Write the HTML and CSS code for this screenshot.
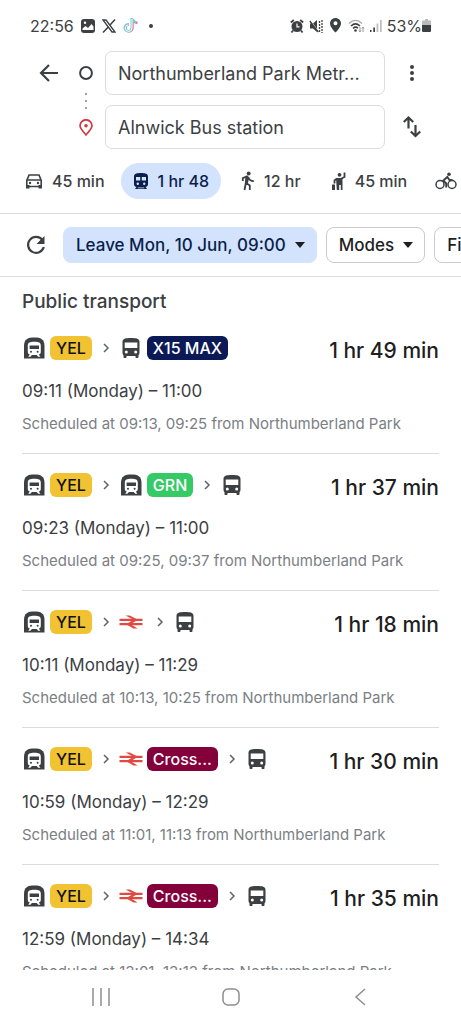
FILE: index.html
```html
<!DOCTYPE html>
<html lang="en-GB">
<head>
<meta charset="utf-8">
<meta name="viewport" content="width=device-width, initial-scale=1">
<title>Directions</title>
<link rel="stylesheet" href="styles.css">
</head>
<body>
<svg class="sprite" aria-hidden="true">
  <symbol id="subway" viewBox="0 0 24 24">
    <path fill="#3c4043" d="M2 22.500V10C2 3 6 1.500 12.300 1.500S22.500 3 22.500 10v12.500z"/>
    <path fill="#fff" d="M5.800 9.500c0-3 2-3.800 6.500-3.800s6.500.8 6.500 3.800v6.500c0 1.500-1 2.300-2 2.500l1.600 2.300h-2.200l-1.500-1.900H9.900l-1.500 1.900H6.200l1.600-2.300c-1-.2-2-1-2-2.500z"/>
    <path fill="#3c4043" d="M7.600 9.500H17V13H7.600z"/>
    <circle fill="#3c4043" cx="9" cy="15.800" r="1"/><circle fill="#3c4043" cx="15.600" cy="15.800" r="1"/>
  </symbol>
  <symbol id="bus" viewBox="0 0 24 24">
    <path fill="#3c4043" d="M3.500 6c0-3.500 3-4 8.500-4s8.500.5 8.500 4v11c0 .9-.4 1.700-1 2.200V21c0 .6-.4 1-1 1h-1c-.6 0-1-.4-1-1v-1h-9v1c0 .6-.4 1-1 1h-1c-.6 0-1-.4-1-1v-1.800c-.6-.5-1-1.300-1-2.200z"/>
    <path fill="#fff" d="M5.700 6.500h12.600V12H5.700z"/>
    <circle fill="#fff" cx="7.300" cy="16" r="1.500"/><circle fill="#fff" cx="16.700" cy="16" r="1.500"/>
  </symbol>
  <symbol id="rail" viewBox="0 0 24 16">
    <path fill="none" stroke="#e04a43" stroke-width="2.200" d="M.5 5.800h23M.5 10.200h23"/>
    <path fill="#e04a43" d="M6.500 1.500h4.200L19 5.800 11.500 10.200 18.700 14.500h-4.200L7 10.200l7.500-4.400z"/>
  </symbol>
  <symbol id="chevron" viewBox="0 0 8 10">
    <path fill="none" stroke="#5f6368" stroke-width="1.500" d="M2 1l4 4-4 4"/>
  </symbol>
</svg>

<div class="screen">
  <div class="status">
    <div class="status-side">
      <span class="clock">22:56</span>
      <svg width="14" height="14" viewBox="0 0 14 14"><rect width="14" height="14" rx="3" fill="#3c4043"/><path fill="#fff" d="M1.500 9.500L4.500 7l2.500 2 3.500-4 2 2.500v3.500h-11z"/><circle cx="4" cy="3.800" r="1.200" fill="#fff"/></svg>
      <svg width="14" height="14" viewBox="0 0 14 14"><path fill="#fff" stroke="#3c4043" stroke-width="1.300" d="M1 1h3l9 12h-3z"/><path stroke="#3c4043" stroke-width="1.500" d="M13 .5L7.800 6.300M6.300 8L1 13.500"/></svg>
      <svg width="16" height="17" viewBox="0 0 16 17" fill="none"><path stroke="#e8789b" stroke-width="2.500" d="M9.500 2v9a3.500 3.500 0 1 1-3.500-3.500M9.500 2c.5 2.500 2 3.500 5 4"/><path stroke="#63d5db" stroke-width="2" d="M8.500 1v9.500A3.500 3.500 0 1 1 5 7.200M8.500 1c.5 2.500 2 3.500 4.500 4"/><path stroke="#fff" d="M9 2v9a3.300 3.300 0 1 1-3.500-3.200"/></svg>
      <span class="dot"></span>
    </div>
    <div class="status-side status-right">
      <svg width="14" height="14" viewBox="0 0 14 14"><circle cx="7" cy="7.500" r="5.500" fill="#3c4043"/><path stroke="#3c4043" stroke-width="1.800" d="M.8 3.500L3.800 1M10.200 1l3 2.500M3 11.500l-1.500 2M11 11.500l1.500 2"/><path stroke="#fff" stroke-width="1.200" fill="none" d="M7 4.500v3.300h2.500"/></svg>
      <svg width="14" height="14" viewBox="0 0 14 14"><path fill="#3c4043" d="M1 4.500h3L8 1v12L4 9.500H1z"/><path stroke="#fff" stroke-width="1" d="M1.500 1.500l8 11"/><path stroke="#3c4043" stroke-width="1.300" d="M.8 2l8.500 11"/><path stroke="#3c4043" stroke-width="1.300" stroke-dasharray="2 1" d="M10.500 2v11M13 1v13"/></svg>
      <svg class="location" width="11" height="15" viewBox="0 0 11 15"><path fill="#3c4043" fill-rule="evenodd" d="M5.500 0A5.300 5.300 0 0 1 11 5.400C11 9 5.500 14.500 5.500 14.500S0 9 0 5.400A5.300 5.300 0 0 1 5.500 0zm0 3.300a2 2 0 1 0 0 4 2 2 0 0 0 0-4z"/></svg>
      <svg width="17" height="14" viewBox="0 0 17 14" fill="none"><path stroke="#aaa" stroke-width="1.300" d="M1 4.500c4-4 9-4 13 0"/><path stroke="#3c4043" stroke-width="1.500" d="M3 7c3-2.800 6-2.800 9 0M5 9.300c2-1.600 3.500-1.600 5 0"/><circle cx="7.500" cy="11.500" r="1.300" fill="#3c4043"/><path stroke="#999" d="M12 8v5l-1.300-1.500M12 13l1-1.500M15 13V8l-1.300 1.500M15 8l1 1.500"/></svg>
      <svg width="12" height="13" viewBox="0 0 12 13"><path fill="#3c4043" d="M0 11h1.500v2H0zM3.300 8.500h1.700V13H3.300z"/><path fill="#bbb" d="M6.600 4.500h1.700V13H6.600zM10 1h1.700v12H10z"/></svg>
      <span class="battery-label">53%</span>
      <svg class="battery" width="9" height="13" viewBox="0 0 9 13"><path fill="#bbb" d="M3 0h3v1.500h3V7H0V1.500h3z"/><path fill="#3c4043" d="M0 6h9v5.500c0 1-.5 1.500-1.500 1.500h-6C.5 13 0 12.500 0 11.500z"/></svg>
    </div>
  </div>

  <header class="trip">
    <button class="icon-button" aria-label="Back"><svg width="20" height="20" viewBox="0 0 20 20"><path fill="none" stroke="#3c4043" stroke-width="2.200" d="M19 10H2.500M10 2l-8 8 8 8"/></svg></button>
    <span class="marker"><svg width="14" height="14" viewBox="0 0 14 14"><circle cx="7" cy="7" r="5.900" fill="none" stroke="#3c4043" stroke-width="2"/></svg></span>
    <input class="place" type="text" aria-label="Starting point" value="Northumberland Park Metr...">
    <button class="icon-button" aria-label="More options"><svg width="20" height="20" viewBox="0 0 20 20" fill="#3c4043"><circle cx="10" cy="4" r="2"/><circle cx="10" cy="10" r="2"/><circle cx="10" cy="16" r="2"/></svg></button>
    <span class="marker destination"><svg width="14" height="17" viewBox="0 0 14 17"><path fill="none" stroke="#d03a42" stroke-width="1.700" d="M7 15.800C3.500 12 1 9.500 1 6.800a6 6 0 0 1 12 0c0 2.700-2.500 5.200-6 9z"/><circle cx="7" cy="6.800" r="1.800" fill="#d03a42"/></svg></span>
    <input class="place" type="text" aria-label="Destination" value="Alnwick Bus station">
    <button class="icon-button" aria-label="Swap start and destination"><svg width="20" height="24" viewBox="0 0 20 24" fill="none" stroke="#3c4043" stroke-width="2.200"><path d="M6.500 13.500V2.500M1.800 7l4.700-4.500L11.200 7M13.500 10v11M8.800 16.500l4.700 4.500 4.700-4.500"/></svg></button>
  </header>

  <nav class="modes" aria-label="Travel mode">
    <button class="mode"><svg width="18" height="18" viewBox="0 0 18 18"><path fill="none" stroke="#3c4043" stroke-width="1.600" d="M1.800 14.500V8.500L4 3h10l2.200 5.500v6zM2 8h14"/><path fill="#3c4043" d="M1 13h3.500v3.500H1zM13.500 13H17v3.500h-3.500z"/><circle cx="5" cy="11" r="1.200" fill="#3c4043"/><circle cx="13" cy="11" r="1.200" fill="#3c4043"/></svg>45 min</button>
    <button class="mode selected" aria-pressed="true"><svg width="16" height="18" viewBox="0 0 16 18"><path fill="#0b1f4d" d="M1 4.500C1 1.500 4 1 8 1s7 .5 7 3.500V12c0 1.700-1 2.700-2.500 3L14 17H2l1.500-2C2 14.700 1 13.700 1 12z"/><path fill="#d3e3fd" d="M3 5h4.200v3.500H3zM8.800 5H13v3.500H8.800zM4.800 15.500h6.400v.8H4.800z"/><circle fill="#d3e3fd" cx="4.800" cy="11.700" r="1.200"/><circle fill="#d3e3fd" cx="11.200" cy="11.700" r="1.200"/></svg>1 hr 48</button>
    <button class="mode walk"><svg width="14" height="20" viewBox="0 0 14 20"><circle cx="7.700" cy="2.500" r="1.900" fill="#3c4043"/><path fill="none" stroke="#3c4043" stroke-width="1.800" d="M1.800 10V7.200L6 5.300l3 3.500c1 1 2.200 1.300 3.800 1.300M6 6l-2.500 13M5 12l3.800 2.500V19"/><path fill="#3c4043" d="M4.500 5.500l3.800.8-1.500 6.500-3-.3z"/></svg>12 hr</button>
    <button class="mode hail"><svg width="14" height="18" viewBox="0 0 14 18"><circle cx="7.500" cy="2.800" r="1.900" fill="#3c4043"/><path fill="#3c4043" d="M4 6h6.500v12H8.800v-5H7.200v5H4.800zM0 12.500h3V18H0z"/><path fill="none" stroke="#3c4043" stroke-width="1.800" d="M9.500 6.500L12.500 5V.5M5 6.500L2.500 8.500v3"/></svg>45 min</button>
    <button class="mode bike" aria-label="Cycling"><svg width="22" height="18" viewBox="0 0 22 18" fill="none" stroke="#3c4043" stroke-width="1.500"><circle cx="5" cy="12.500" r="4"/><circle cx="17" cy="12.500" r="4"/><path stroke-width="1.900" d="M11.200 15.500v-4L8.300 8.500l4-3.500 2.200 3h3"/><circle cx="14" cy="2.300" r="1.800" fill="#3c4043" stroke="none"/></svg></button>
  </nav>

  <div class="filters">
    <button class="icon-button refresh" aria-label="Refresh"><svg width="20" height="20" viewBox="0 0 20 20"><path fill="none" stroke="#3c4043" stroke-width="2.200" d="M17.800 12A8 8 0 1 1 16.500 5L13 8.500"/><path fill="#3c4043" d="M18.500 1v8h-8z"/></svg></button>
    <button class="filter active">Leave Mon, 10 Jun, 09:00<span class="caret"></span></button>
    <button class="filter">Modes<span class="caret"></span></button>
    <button class="filter">Filters<span class="caret"></span></button>
  </div>

  <main class="results">
    <h1>Public transport</h1>
    <ul>
      <li>
        <div class="summary"><div class="legs"><svg class="leg"><use href="#subway"/></svg><span class="line yellow">YEL</span><svg class="next"><use href="#chevron"/></svg><svg class="leg"><use href="#bus"/></svg><span class="line navy">X15 MAX</span></div><strong>1 hr 49 min</strong></div>
        <p class="times">09:11 (Monday) – 11:00</p>
        <p class="schedule">Scheduled at 09:13, 09:25 from Northumberland Park</p>
      </li>
      <li>
        <div class="summary"><div class="legs"><svg class="leg"><use href="#subway"/></svg><span class="line yellow">YEL</span><svg class="next"><use href="#chevron"/></svg><svg class="leg"><use href="#subway"/></svg><span class="line green">GRN</span><svg class="next"><use href="#chevron"/></svg><svg class="leg"><use href="#bus"/></svg></div><strong>1 hr 37 min</strong></div>
        <p class="times">09:23 (Monday) – 11:00</p>
        <p class="schedule">Scheduled at 09:25, 09:37 from Northumberland Park</p>
      </li>
      <li>
        <div class="summary"><div class="legs"><svg class="leg"><use href="#subway"/></svg><span class="line yellow">YEL</span><svg class="next"><use href="#chevron"/></svg><svg class="leg"><use href="#rail"/></svg><svg class="next"><use href="#chevron"/></svg><svg class="leg"><use href="#bus"/></svg></div><strong>1 hr 18 min</strong></div>
        <p class="times">10:11 (Monday) – 11:29</p>
        <p class="schedule">Scheduled at 10:13, 10:25 from Northumberland Park</p>
      </li>
      <li>
        <div class="summary"><div class="legs"><svg class="leg"><use href="#subway"/></svg><span class="line yellow">YEL</span><svg class="next"><use href="#chevron"/></svg><svg class="leg"><use href="#rail"/></svg><span class="line maroon">Cross...</span><svg class="next"><use href="#chevron"/></svg><svg class="leg"><use href="#bus"/></svg></div><strong>1 hr 30 min</strong></div>
        <p class="times">10:59 (Monday) – 12:29</p>
        <p class="schedule">Scheduled at 11:01, 11:13 from Northumberland Park</p>
      </li>
      <li>
        <div class="summary"><div class="legs"><svg class="leg"><use href="#subway"/></svg><span class="line yellow">YEL</span><svg class="next"><use href="#chevron"/></svg><svg class="leg"><use href="#rail"/></svg><span class="line maroon">Cross...</span><svg class="next"><use href="#chevron"/></svg><svg class="leg"><use href="#bus"/></svg></div><strong>1 hr 35 min</strong></div>
        <p class="times">12:59 (Monday) – 14:34</p>
        <p class="schedule">Scheduled at 13:01, 13:13 from Northumberland Park</p>
      </li>
    </ul>
  </main>

  <nav class="system" aria-label="System">
    <button aria-label="Recent apps"><svg width="18" height="18" viewBox="0 0 18 18"><path stroke="#8e8e8e" stroke-width="1.500" d="M1 0v18M9 0v18M17 0v18"/></svg></button>
    <button aria-label="Home"><svg width="18" height="18" viewBox="0 0 18 18"><rect x="1" y="1" width="16" height="16" rx="5" fill="none" stroke="#8e8e8e" stroke-width="1.500"/></svg></button>
    <button aria-label="Back"><svg width="18" height="18" viewBox="0 0 18 18"><path fill="none" stroke="#8e8e8e" stroke-width="1.500" d="M14 1L5 9l9 8"/></svg></button>
  </nav>
</div>
</body>
</html>
```
FILE: styles.css
```css
* { box-sizing: border-box; }
body { margin: 0; background: #fff; color: #3c4043; font-family: Inter, Roboto, sans-serif; }
button, input { font: inherit; color: inherit; margin: 0; }
button { border: 0; background: none; padding: 0; }
svg { display: block; flex: none; }
h1, p, ul { margin: 0; padding: 0; }
.sprite { position: absolute; width: 0; height: 0; }
.screen { display: flex; flex-direction: column; height: 100vh; overflow: hidden; }

.status { flex: none; display: flex; justify-content: space-between; height: 51px; padding: 0 30px; font-size: 16px; }
.status-side { display: flex; align-items: center; gap: 7px; }
.status-right { gap: 5px; }
.dot { width: 4px; height: 4px; margin-left: 3px; border-radius: 50%; background: #3c4043; }
.location { margin: 0 2px; }
.battery { margin-left: -5px; }

.trip { flex: none; display: grid; grid-template-columns: 24px 26px 1fr 24px; grid-template-rows: 44px 44px; column-gap: 12px; row-gap: 10px; padding: 0 37px; }
.icon-button { display: grid; place-items: center; }
.trip .icon-button { justify-self: center; }
.marker { display: grid; place-items: center; }
.trip .place { min-width: 0; width: auto; margin: 0 3px 0 -6px; padding: 0 12px; border: 1px solid #dadce0; border-radius: 7px; background: #fff; font-size: 18px; outline: 0; }
.destination { position: relative; grid-column: 2; }
.destination::before { content: ""; position: absolute; top: -12px; left: 12px; width: 2px; height: 16px; background: repeating-linear-gradient(#9aa0a6 0 2px, transparent 2px 7px); }

.modes { flex: none; display: flex; align-items: center; height: 65px; padding-left: 13px; border-bottom: 1px solid #dadce0; overflow: hidden; }
.mode { flex: none; display: flex; align-items: center; gap: 9px; height: 36px; padding: 0 12px; border-radius: 18px; font-size: 16px; font-weight: 500; white-space: nowrap; }
.mode.selected { margin: 0 6px 0 4px; background: #d3e3fd; color: #0b1f4d; }
.walk { margin: 0 7px 0 2px; }
.hail { margin-right: 4px; }

.filters { flex: none; display: flex; align-items: center; gap: 9px; height: 63px; padding-left: 23px; border-bottom: 1px solid #dadce0; overflow: hidden; }
.refresh { flex: none; width: 26px; height: 36px; margin-right: 5px; }
.filter { flex: none; display: flex; align-items: center; gap: 9px; height: 36px; padding: 0 11px 0 12px; border: 1px solid #c9cbce; border-radius: 8px; color: #1f1f1f; font-size: 17px; font-weight: 500; white-space: nowrap; }
.filter.active { border-color: #d3e3fd; background: #d3e3fd; color: #0b1f4d; }
.caret { border: 5px solid transparent; border-top: 6px solid #1f1f1f; border-bottom: 0; }

.results { flex: 1; min-height: 0; padding: 13px 22px 0; overflow: hidden; }
h1 { margin-bottom: 3px; font-size: 19px; line-height: 24px; font-weight: 500; }
ul { list-style: none; }
li { padding: 19px 0; border-bottom: 1px solid #dadce0; }
.summary { display: flex; justify-content: space-between; height: 24px; }
.legs { display: flex; align-items: center; }
.leg { width: 24px; height: 24px; margin-right: 4px; }
.next { width: 8px; height: 10px; margin: 0 9px 0 10px; }
.leg + .next { margin-left: 9px; }
.line { height: 24px; padding: 0 6px; border-radius: 6px; font-size: 16px; line-height: 24px; font-weight: 500; color: #fff; }
.yellow { background: #f1c232; color: #111; }
.navy { background: #0b1a57; }
.green { background: #35ca66; }
.maroon { background: #84003a; }
strong { padding-top: 3px; color: #1f1f1f; font-size: 21px; line-height: 24px; font-weight: 500; }
.times { margin-top: 19px; font-size: 17px; line-height: 24px; }
.schedule { margin-top: 11px; color: #7b8085; font-size: 15px; line-height: 20px; }

.system { flex: none; display: flex; justify-content: space-between; align-items: center; height: 54px; padding: 0 92px; }
```
